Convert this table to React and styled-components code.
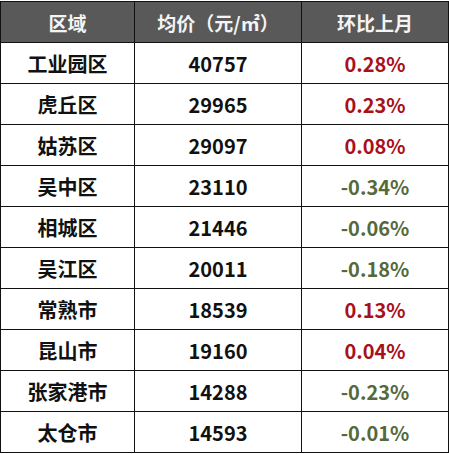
import styled, { createGlobalStyle } from 'styled-components'

const rows = [
	{ area: '工业园区', price: '40757', change: '0.28%' },
	{ area: '虎丘区', price: '29965', change: '0.23%' },
	{ area: '姑苏区', price: '29097', change: '0.08%' },
	{ area: '吴中区', price: '23110', change: '-0.34%' },
	{ area: '相城区', price: '21446', change: '-0.06%' },
	{ area: '吴江区', price: '20011', change: '-0.18%' },
	{ area: '常熟市', price: '18539', change: '0.13%' },
	{ area: '昆山市', price: '19160', change: '0.04%' },
	{ area: '张家港市', price: '14288', change: '-0.23%' },
	{ area: '太仓市', price: '14593', change: '-0.01%' },
]

export default function App() {
	return (
		<>
			<GlobalStyle />
			<Table>
				<HeadCell>区域</HeadCell>
				<HeadCell>均价（元/㎡）</HeadCell>
				<HeadCell>环比上月</HeadCell>
				{rows.map((r) => (
					<Row key={r.area}>
						<Cell>{r.area}</Cell>
						<Cell>{r.price}</Cell>
						<Cell $tone={r.change.startsWith('-') ? 'down' : 'up'}>{r.change}</Cell>
					</Row>
				))}
			</Table>
		</>
	)
}

const GlobalStyle = createGlobalStyle`
	body {
		margin: 0;
		background: #fff;
		font-family: "Noto Sans CJK SC", "Noto Sans", sans-serif;
	}
`

const Table = styled.div`
	display: grid;
	grid-template-columns: 133px 166px 146px;
	grid-auto-rows: 40px;
	gap: 1px;
	padding: 1px;
	margin-top: 1px;
	width: max-content;
	background: #111;
`

const Row = styled.div`
	display: contents;
`

const HeadCell = styled.div`
	display: flex;
	align-items: center;
	justify-content: center;
	background: #595959;
	color: #f4f4f4;
	font-size: 19px;
	font-weight: 700;
`

const Cell = styled.div`
	display: flex;
	align-items: center;
	justify-content: center;
	background: #fff;
	color: ${({ $tone }) => ($tone === 'up' ? '#a8101a' : $tone === 'down' ? '#56693a' : '#111')};
	font-size: 20px;
	font-weight: 700;
`
